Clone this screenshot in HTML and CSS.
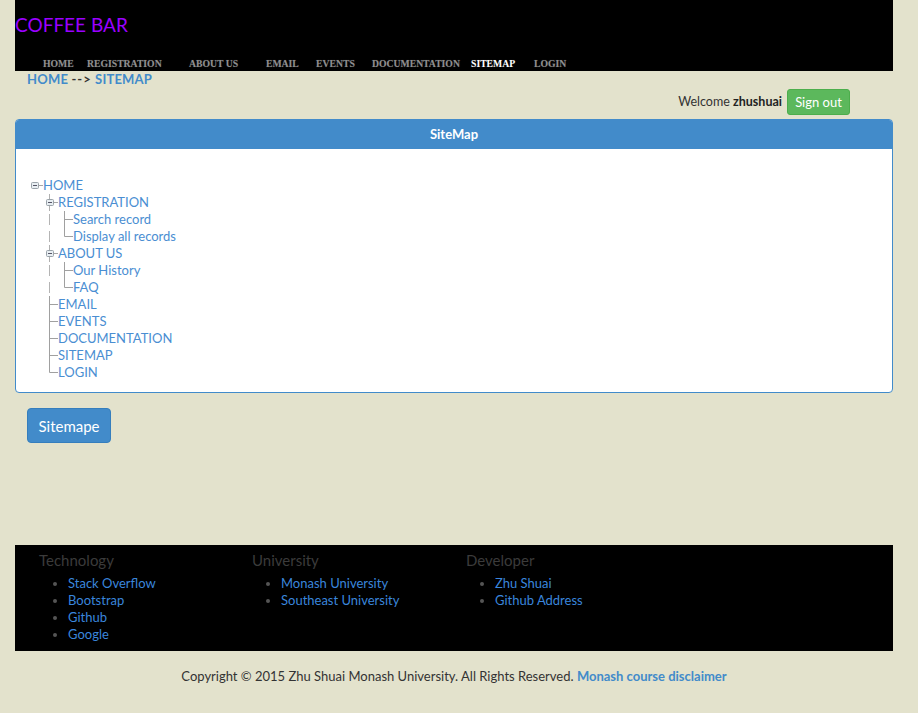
FILE: index.html
```html
<!DOCTYPE html>
<html>
<head>
<meta charset="utf-8">
<title>Coffee Bar - Sitemap</title>
<link rel="stylesheet" href="styles.css">
</head>
<body>
<div class="page">
  <header class="top">
    <div class="brand">COFFEE BAR</div>
    <nav class="nav">
      <a href="#">HOME</a>
      <a href="#">REGISTRATION</a>
      <a href="#">ABOUT US</a>
      <a href="#">EMAIL</a>
      <a href="#">EVENTS</a>
      <a href="#">DOCUMENTATION</a>
      <a href="#" class="active">SITEMAP</a>
      <a href="#">LOGIN</a>
    </nav>
  </header>

  <div class="crumb"><a href="#">HOME</a> <span class="arrow">--&gt;</span> <a href="#">SITEMAP</a></div>

  <div class="userbar">
    <span class="welcome">Welcome <b>zhushuai</b></span>
    <button class="btn btn-green">Sign out</button>
  </div>

  <section class="panel">
    <div class="panel-head">SiteMap</div>
    <div class="panel-body">
      <ul class="tree">
        <li class="row"><svg class="ti" viewBox="0 0 12 17"><rect x="0.5" y="5.5" width="7" height="6" rx="1" fill="#e8eef2" stroke="#9aa3aa"/><line x1="2" y1="8.5" x2="6" y2="8.5" stroke="#556"/><line x1="7.5" y1="8.5" x2="12" y2="8.5" stroke="#a6a6a6"/></svg><a href="#">HOME</a></li>
        <li class="row"><span class="ind"></span><svg class="ti" viewBox="0 0 12 17"><line x1="3.5" y1="0" x2="3.5" y2="5.5" stroke="#b0b0b0"/><line x1="3.5" y1="11.5" x2="3.5" y2="17" stroke="#b0b0b0"/><rect x="0.5" y="5.5" width="7" height="6" rx="1" fill="#e8eef2" stroke="#9aa3aa"/><line x1="2" y1="8.5" x2="6" y2="8.5" stroke="#556"/><line x1="7.5" y1="8.5" x2="12" y2="8.5" stroke="#a6a6a6"/></svg><a href="#">REGISTRATION</a></li>
        <li class="row"><span class="ind"></span><span class="ind"><svg class="tl" viewBox="0 0 15 17"><line x1="3.5" y1="3" x2="3.5" y2="14" stroke="#b4b4b4"/></svg></span><svg class="ti" viewBox="0 0 12 17"><line x1="3.5" y1="0" x2="3.5" y2="17" stroke="#a0a0a0"/><line x1="3.5" y1="8.5" x2="12" y2="8.5" stroke="#a0a0a0"/></svg><a href="#">Search record</a></li>
        <li class="row"><span class="ind"></span><span class="ind"><svg class="tl" viewBox="0 0 15 17"><line x1="3.5" y1="3" x2="3.5" y2="14" stroke="#b4b4b4"/></svg></span><svg class="ti" viewBox="0 0 12 17"><line x1="3.5" y1="0" x2="3.5" y2="8.5" stroke="#a0a0a0"/><line x1="3.5" y1="8.5" x2="12" y2="8.5" stroke="#a0a0a0"/></svg><a href="#">Display all records</a></li>
        <li class="row"><span class="ind"></span><svg class="ti" viewBox="0 0 12 17"><line x1="3.5" y1="0" x2="3.5" y2="5.5" stroke="#b0b0b0"/><line x1="3.5" y1="11.5" x2="3.5" y2="17" stroke="#b0b0b0"/><rect x="0.5" y="5.5" width="7" height="6" rx="1" fill="#e8eef2" stroke="#9aa3aa"/><line x1="2" y1="8.5" x2="6" y2="8.5" stroke="#556"/><line x1="7.5" y1="8.5" x2="12" y2="8.5" stroke="#a6a6a6"/></svg><a href="#">ABOUT US</a></li>
        <li class="row"><span class="ind"></span><span class="ind"><svg class="tl" viewBox="0 0 15 17"><line x1="3.5" y1="3" x2="3.5" y2="14" stroke="#b4b4b4"/></svg></span><svg class="ti" viewBox="0 0 12 17"><line x1="3.5" y1="0" x2="3.5" y2="17" stroke="#a0a0a0"/><line x1="3.5" y1="8.5" x2="12" y2="8.5" stroke="#a0a0a0"/></svg><a href="#">Our History</a></li>
        <li class="row"><span class="ind"></span><span class="ind"><svg class="tl" viewBox="0 0 15 17"><line x1="3.5" y1="3" x2="3.5" y2="14" stroke="#b4b4b4"/></svg></span><svg class="ti" viewBox="0 0 12 17"><line x1="3.5" y1="0" x2="3.5" y2="8.5" stroke="#a0a0a0"/><line x1="3.5" y1="8.5" x2="12" y2="8.5" stroke="#a0a0a0"/></svg><a href="#">FAQ</a></li>
        <li class="row"><span class="ind"></span><svg class="ti" viewBox="0 0 12 17"><line x1="3.5" y1="0" x2="3.5" y2="17" stroke="#a0a0a0"/><line x1="3.5" y1="8.5" x2="12" y2="8.5" stroke="#a0a0a0"/></svg><a href="#">EMAIL</a></li>
        <li class="row"><span class="ind"></span><svg class="ti" viewBox="0 0 12 17"><line x1="3.5" y1="0" x2="3.5" y2="17" stroke="#a0a0a0"/><line x1="3.5" y1="8.5" x2="12" y2="8.5" stroke="#a0a0a0"/></svg><a href="#">EVENTS</a></li>
        <li class="row"><span class="ind"></span><svg class="ti" viewBox="0 0 12 17"><line x1="3.5" y1="0" x2="3.5" y2="17" stroke="#a0a0a0"/><line x1="3.5" y1="8.5" x2="12" y2="8.5" stroke="#a0a0a0"/></svg><a href="#">DOCUMENTATION</a></li>
        <li class="row"><span class="ind"></span><svg class="ti" viewBox="0 0 12 17"><line x1="3.5" y1="0" x2="3.5" y2="17" stroke="#a0a0a0"/><line x1="3.5" y1="8.5" x2="12" y2="8.5" stroke="#a0a0a0"/></svg><a href="#">SITEMAP</a></li>
        <li class="row"><span class="ind"></span><svg class="ti" viewBox="0 0 12 17"><line x1="3.5" y1="0" x2="3.5" y2="8.5" stroke="#a0a0a0"/><line x1="3.5" y1="8.5" x2="12" y2="8.5" stroke="#a0a0a0"/></svg><a href="#">LOGIN</a></li>
      </ul>
    </div>
  </section>

  <div class="action">
    <button class="btn btn-blue">Sitemape</button>
  </div>

  <footer class="foot">
    <div class="fcol">
      <h4>Technology</h4>
      <ul>
        <li><a href="#">Stack Overflow</a></li>
        <li><a href="#">Bootstrap</a></li>
        <li><a href="#">Github</a></li>
        <li><a href="#">Google</a></li>
      </ul>
    </div>
    <div class="fcol">
      <h4>University</h4>
      <ul>
        <li><a href="#">Monash University</a></li>
        <li><a href="#">Southeast University</a></li>
      </ul>
    </div>
    <div class="fcol">
      <h4>Developer</h4>
      <ul>
        <li><a href="#">Zhu Shuai</a></li>
        <li><a href="#">Github Address</a></li>
      </ul>
    </div>
  </footer>

  <p class="copy">Copyright © 2015 Zhu Shuai Monash University. All Rights Reserved. <a href="#">Monash course disclaimer</a></p>
</div>
</body>
</html>
```

FILE: styles.css
```css
html, body {
  margin: 0;
  padding: 0;
  background: #e3e2cc;
}
body {
  font-family: "Lato", "DejaVu Sans", sans-serif;
  font-size: 13px;
  color: #333;
}
a { text-decoration: none; }

.page {
  width: 878px;
  margin-left: 15px;
}

.top {
  background: #000;
  height: 71px;
  display: flex;
  flex-direction: column;
}
.brand {
  color: #9a00ff;
  font-size: 19px;
  line-height: 24px;
  padding-top: 13px;
  height: 38px;
}
.nav {
  display: grid;
  grid-template-columns: 44px 102px 77px 50px 56px 99px 63px auto;
  padding-left: 28px;
  font-family: "Liberation Serif", serif;
  font-weight: bold;
  font-size: 9.7px;
  line-height: 12px;
  padding-top: 7px;
}
.nav a {
  color: #8f8f8f;
  text-shadow: 0 0 1px #333;
}
.nav a.active { color: #fff; }

.crumb {
  padding-left: 12px;
  font-weight: bold;
  font-size: 13px;
  line-height: 16px;
  letter-spacing: 0.2px;
}
.crumb a { color: #428bca; }
.crumb .arrow { color: #333; letter-spacing: 1px; }

.userbar {
  display: flex;
  justify-content: flex-end;
  align-items: center;
  gap: 5px;
  padding-right: 43px;
  height: 27px;
  margin-top: 1px;
}
.welcome { font-size: 12.5px; }
.welcome b { color: #222; }

.btn {
  font-family: inherit;
  color: #fff;
  border-radius: 3px;
  cursor: pointer;
}
.btn-green {
  background: #5cb85c;
  border: 1px solid #4cae4c;
  font-size: 13px;
  height: 26px;
  width: 63px;
  padding: 0;
}
.btn-blue {
  background: #428bca;
  border: 1px solid #357ebd;
  font-size: 15px;
  height: 35px;
  width: 84px;
  border-radius: 4px;
}

.panel {
  margin-top: 4px;
  border: 1px solid #428bca;
  border-radius: 4px;
  background: #fff;
  overflow: hidden;
}
.panel-head {
  background: #428bca;
  color: #fff;
  font-weight: bold;
  text-align: center;
  height: 29px;
  line-height: 29px;
}
.panel-body {
  padding: 28px 15px 11px 15px;
}

.tree {
  list-style: none;
  margin: 0;
  padding: 0;
}
.row {
  display: flex;
  align-items: center;
  height: 17px;
}
.ind {
  width: 15px;
  height: 17px;
  flex: none;
}
.tl { width: 15px; height: 17px; display: block; }
.ti { width: 12px; height: 17px; flex: none; display: block; }
.row a {
  color: #4a8ed2;
  font-size: 13px;
  line-height: 17px;
}

.action {
  padding: 15px 12px 0;
  height: 137px;
}

.foot {
  background: #000;
  height: 106px;
  display: grid;
  grid-template-columns: 213px 214px 213px;
  padding-left: 24px;
  box-sizing: border-box;
}
.foot h4 {
  margin: 0;
  padding-top: 6px;
  font-weight: normal;
  font-size: 15px;
  line-height: 18px;
  color: #3b3b3b;
}
.foot ul {
  margin: 6px 0 0;
  padding-left: 29px;
  color: #555;
}
.foot li {
  line-height: 17px;
}
.foot li a { color: #3a86dc; }

.copy {
  text-align: center;
  margin: 16px 0 0;
  line-height: 18px;
}
.copy a {
  color: #428bca;
  font-weight: bold;
}
```
